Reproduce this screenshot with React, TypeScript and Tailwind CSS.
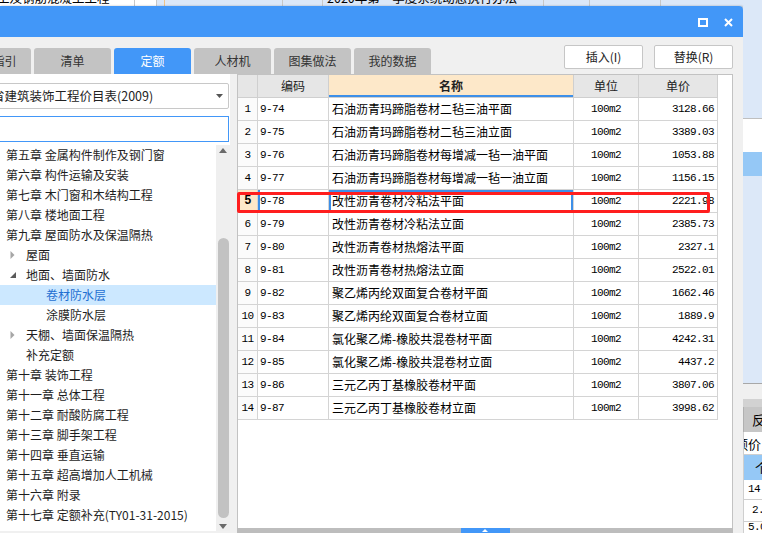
import React from "react";

type TreeItem = { t: string; l: 0 | 1 | 2; a?: "open" | "closed"; sel?: boolean };

const tree: TreeItem[] = [
  { t: "第五章 金属构件制作及钢门窗", l: 0 },
  { t: "第六章 构件运输及安装", l: 0 },
  { t: "第七章 木门窗和木结构工程", l: 0 },
  { t: "第八章 楼地面工程", l: 0 },
  { t: "第九章 屋面防水及保温隔热", l: 0 },
  { t: "屋面", l: 1, a: "closed" },
  { t: "地面、墙面防水", l: 1, a: "open" },
  { t: "卷材防水层", l: 2, sel: true },
  { t: "涂膜防水层", l: 2 },
  { t: "天棚、墙面保温隔热", l: 1, a: "closed" },
  { t: "补充定额", l: 1 },
  { t: "第十章 装饰工程", l: 0 },
  { t: "第十一章 总体工程", l: 0 },
  { t: "第十二章 耐酸防腐工程", l: 0 },
  { t: "第十三章 脚手架工程", l: 0 },
  { t: "第十四章 垂直运输", l: 0 },
  { t: "第十五章 超高增加人工机械", l: 0 },
  { t: "第十六章 附录", l: 0 },
  { t: "第十七章 定额补充(TY01-31-2015)", l: 0 },
];

const rows: [string, string, string, string][] = [
  ["9-74", "石油沥青玛蹄脂卷材二毡三油平面", "100m2", "3128.66"],
  ["9-75", "石油沥青玛蹄脂卷材二毡三油立面", "100m2", "3389.03"],
  ["9-76", "石油沥青玛蹄脂卷材每增减一毡一油平面", "100m2", "1053.88"],
  ["9-77", "石油沥青玛蹄脂卷材每增减一毡一油立面", "100m2", "1156.15"],
  ["9-78", "改性沥青卷材冷粘法平面", "100m2", "2221.98"],
  ["9-79", "改性沥青卷材冷粘法立面", "100m2", "2385.73"],
  ["9-80", "改性沥青卷材热熔法平面", "100m2", "2327.1"],
  ["9-81", "改性沥青卷材热熔法立面", "100m2", "2522.01"],
  ["9-82", "聚乙烯丙纶双面复合卷材平面", "100m2", "1662.46"],
  ["9-83", "聚乙烯丙纶双面复合卷材立面", "100m2", "1889.9"],
  ["9-84", "氯化聚乙烯-橡胶共混卷材平面", "100m2", "4242.31"],
  ["9-85", "氯化聚乙烯-橡胶共混卷材立面", "100m2", "4437.2"],
  ["9-86", "三元乙丙丁基橡胶卷材平面", "100m2", "3807.06"],
  ["9-87", "三元乙丙丁基橡胶卷材立面", "100m2", "3998.62"],
];

const tabs = ["清单指引", "清单", "定额", "人材机", "图集做法", "我的数据"];

function TopStrip() {
  return (
    <div className="h-[6px] flex overflow-hidden bg-[#dce8f8]">
      <div className="w-[135px] shrink-0 bg-white border-r border-[#c8c8c8] overflow-hidden">
        <span className="block -mt-[9px] -ml-[3px] text-[12.5px] leading-[14px] whitespace-nowrap text-black">
          工及钢筋混凝土工程
        </span>
      </div>
      <div className="w-[22px] shrink-0 bg-white border-r border-[#c8c8c8]" />
      <div className="w-[8px] shrink-0 border-r border-[#f0c48a]" />
      <div className="w-[118px] shrink-0 border-r border-[#c8c8c8]" />
      <div className="w-[40px] shrink-0 border-r border-[#c8c8c8]" />
      <div className="w-[221px] shrink-0 border-r border-[#c8c8c8] overflow-hidden">
        <span className="block -mt-[9px] ml-[4px] text-[12.5px] leading-[14px] whitespace-nowrap text-black">
          2020年第一季度系统动态执行办法
        </span>
      </div>
      <div className="w-[46px] shrink-0 border-r border-[#c8c8c8]" />
      <div className="w-[71px] shrink-0 border-r border-[#c8c8c8]" />
      <div className="flex-1" />
    </div>
  );
}

function Arrow({ open }: { open: boolean }) {
  return open ? (
    <svg width="6" height="6" viewBox="0 0 6 6" className="block">
      <polygon points="6,0 6,6 0,6" fill="#5a5a5a" />
    </svg>
  ) : (
    <svg width="5" height="8" viewBox="0 0 5 8" className="block">
      <polygon points="0.5,0 4.5,4 0.5,8" fill="#a6a6a6" />
    </svg>
  );
}

function LeftPanel() {
  return (
    <div className="w-[230px] h-[457px] shrink-0 bg-white flex flex-col">
      <div className="mt-[9px] h-[26px] -ml-[2px] mr-[1px] border border-[#c8c8c8] rounded-[2px] flex items-center justify-between overflow-hidden">
        <span className="-ml-[7px] text-[12.5px] whitespace-nowrap text-[#222]">
          省建筑装饰工程价目表(2009)
        </span>
        <svg width="7" height="4" viewBox="0 0 7 4" className="mr-[5px] shrink-0">
          <polygon points="0,0 7,0 3.5,4" fill="#555" />
        </svg>
      </div>
      <div className="mt-[7px] h-[26px] -ml-[2px] mr-[1px] border border-[#4297f8]" />
      <div className="mt-[3px] flex flex-1 min-h-0">
        <div className="w-[216px] shrink-0">
          {tree.map((it, i) => (
            <div
              key={i}
              className={`h-[20px] flex items-center whitespace-nowrap ${
                it.sel ? "bg-[#cce8ff] text-[#1f6fd1]" : "text-[#1e1e1e]"
              }`}
            >
              {it.l === 0 && <span className="pl-[6px]">{it.t}</span>}
              {it.l === 1 && (
                <>
                  <span className="w-[26px] shrink-0 flex justify-start pl-[10px]">
                    {it.a ? <Arrow open={it.a === "open"} /> : null}
                  </span>
                  <span>{it.t}</span>
                </>
              )}
              {it.l === 2 && <span className="pl-[46px]">{it.t}</span>}
            </div>
          ))}
        </div>
        <div className="w-[14px] shrink-0 bg-[#efefef] flex flex-col items-center">
          <svg width="8" height="5" viewBox="0 0 8 5" className="mt-[3px]">
            <polygon points="0,5 8,5 4,0" fill="#6a6a6a" />
          </svg>
          <div className="mt-[85px] w-[11px] h-[280px] rounded-full bg-[#c2c2c2]" />
          <svg width="8" height="5" viewBox="0 0 8 5" className="mt-[6px]">
            <polygon points="0,0 8,0 4,5" fill="#6a6a6a" />
          </svg>
        </div>
      </div>
    </div>
  );
}

const widths = ["w-[20px]", "w-[71px]", "w-[245px]", "w-[65px]", "w-[79px]"];
const mono = "font-['Liberation_Mono','DejaVu_Sans_Mono',monospace] text-[11px] tracking-[-0.6px]";

function RightPanel() {
  return (
    <div className="w-[496px] shrink-0 flex flex-col">
      <div className="h-[454px] bg-white border-t border-l border-r border-[#c2c2c2] relative">
        <div className="flex h-[23px] text-[#222]">
          <div className={`${widths[0]} bg-[#e6e6e6] border-r border-b border-[#cfcfcf]`} />
          <div className={`${widths[1]} bg-[#e6e6e6] border-r border-b border-[#cfcfcf] flex items-center justify-center`}>
            编码
          </div>
          <div className={`${widths[2]} bg-[#fde8c9] border-r border-b border-[#cfcfcf] flex items-center justify-center font-bold shadow-[inset_0_-2px_0_#3d8fe8]`}>
            名称
          </div>
          <div className={`${widths[3]} bg-[#e6e6e6] border-r border-b border-[#cfcfcf] flex items-center justify-center`}>
            单位
          </div>
          <div className={`${widths[4]} bg-[#e6e6e6] border-r border-b border-[#cfcfcf] flex items-center justify-center`}>
            单价
          </div>
        </div>
        {rows.map((r, i) => {
          const cur = i === 4;
          return (
            <div key={i} className="flex h-[23px] text-black">
              <div
                className={`${widths[0]} border-r border-b border-[#d4d4d4] flex items-center justify-center ${mono} ${
                  cur ? "bg-[#fde8c9] font-bold text-[12px]" : "bg-[#fbfbfb]"
                }`}
              >
                {i + 1}
              </div>
              <div
                className={`${widths[1]} border-r border-b border-[#d4d4d4] flex items-center pl-[2px] ${mono} ${
                  cur ? "shadow-[inset_2px_0_0_#3d8fe8]" : ""
                }`}
              >
                {r[0]}
              </div>
              <div
                className={`${widths[2]} border-r border-b border-[#d4d4d4] flex items-center pl-[3px] whitespace-nowrap overflow-hidden text-[12px] ${
                  cur ? "shadow-[inset_2px_2px_0_#3d8fe8,inset_-2px_0_0_#3d8fe8]" : ""
                }`}
              >
                {r[1]}
              </div>
              <div className={`${widths[3]} border-r border-b border-[#d4d4d4] flex items-center justify-center ${mono}`}>
                {r[2]}
              </div>
              <div className={`${widths[4]} border-r border-b border-[#d4d4d4] flex items-center justify-end pr-[3px] ${mono}`}>
                {r[3]}
              </div>
            </div>
          );
        })}
        <div className="absolute left-[-1px] top-[117px] w-[473px] h-[21px] border-[3px] border-[#ff1e1e] rounded-[2px]" />
      </div>
      <div className="h-[5px] bg-[#bdbdbd] flex justify-center">
        <div className="w-[49px] h-[5px] bg-[#4297f8] flex items-center justify-center">
          <svg width="6" height="3" viewBox="0 0 6 3">
            <polygon points="0,3 6,3 3,0" fill="white" />
          </svg>
        </div>
      </div>
    </div>
  );
}

function Dialog() {
  return (
    <div className="w-[743px] h-[527px] shrink-0 flex flex-col bg-[#f0f0f0] rounded-tr-[4px] overflow-hidden shadow-[1px_0_2px_rgba(0,0,0,0.3)]">
      <div className="h-[31px] shrink-0 bg-[#4297f8] flex items-center justify-end pr-[10px] gap-[16px]">
        <svg width="10" height="9" viewBox="0 0 10 9" className="mt-[2px]">
          <rect x="1" y="1" width="8" height="7" fill="none" stroke="white" strokeWidth="2" />
        </svg>
        <svg width="9" height="9" viewBox="0 0 9 9" className="mt-[2px]">
          <path d="M1 1L8 8M8 1L1 8" stroke="white" strokeWidth="2" />
        </svg>
      </div>
      <div className="h-[37px] shrink-0 flex justify-between items-end overflow-hidden">
        <div className="flex gap-[3px] -ml-[46px]">
          {tabs.map((t) => (
            <div
              key={t}
              className={`w-[77px] h-[26px] shrink-0 rounded-t-[3px] flex items-center justify-center text-[12px] ${
                t === "定额" ? "bg-[#4297f8] text-white" : "bg-[#c3c3c3] text-[#333]"
              }`}
            >
              {t}
            </div>
          ))}
        </div>
        <div className="self-start mt-[8px] mr-[10px] flex gap-[11px]">
          {["插入(I)", "替换(R)"].map((b) => (
            <div
              key={b}
              className="w-[79px] h-[24px] bg-white border border-[#c6c6c6] rounded-[2px] flex items-center justify-center text-[12px] text-[#222]"
            >
              {b}
            </div>
          ))}
        </div>
      </div>
      <div className="flex h-[459px]">
        <LeftPanel />
        <div className="w-[7px] shrink-0" />
        <RightPanel />
      </div>
    </div>
  );
}

function RightStrip() {
  return (
    <div className="w-[19px] shrink-0 flex flex-col overflow-hidden text-[13px] text-black">
      <div className="h-[112px] shrink-0 bg-[#dce8f8]" />
      <div className="h-[1px] shrink-0 bg-[#bfbfbf]" />
      <div className="h-[33px] shrink-0 bg-white" />
      <div className="h-[24px] shrink-0 bg-[#95c8f6]" />
      <div className="h-[207px] shrink-0 bg-[#dce8f8]" />
      <div className="h-[1px] shrink-0 bg-[#a8a8a8]" />
      <div className="h-[15px] shrink-0 bg-[#f0f0f0]" />
      <div className="h-[8px] shrink-0 bg-[#d2d2d2]" />
      <div className="h-[25px] shrink-0 bg-[#c6c6c6] border-l border-[#b0b0b0] flex items-center pl-[8px] whitespace-nowrap">
        反
      </div>
      <div className="h-[23px] shrink-0 bg-white border-l border-b border-[#cfcfcf] flex items-center justify-end pr-[1px] whitespace-nowrap overflow-hidden">
        额价
      </div>
      <div className="h-[25px] shrink-0 bg-[#95c8f6] border-l border-[#cfcfcf] flex items-center pl-[11px] whitespace-nowrap">
        个
      </div>
      <div className={`h-[20px] shrink-0 bg-white border-l border-b border-[#cfcfcf] flex items-center pl-[4px] whitespace-nowrap ${mono}`}>
        14.
      </div>
      <div className={`h-[22px] shrink-0 bg-white border-l border-b border-[#cfcfcf] flex items-center pl-[8px] whitespace-nowrap ${mono}`}>
        2.
      </div>
      <div className={`flex-1 bg-white border-l border-[#cfcfcf] flex items-end pl-[4px] whitespace-nowrap ${mono}`}>
        5.0
      </div>
    </div>
  );
}

export default function App() {
  return (
    <div className="w-[762px] h-[533px] overflow-hidden bg-[#dce8f8] font-['Noto_Sans_CJK_SC','Noto_Sans',sans-serif] text-[12px] leading-none text-[#222]">
      <TopStrip />
      <div className="flex h-[527px]">
        <Dialog />
        <RightStrip />
      </div>
    </div>
  );
}
